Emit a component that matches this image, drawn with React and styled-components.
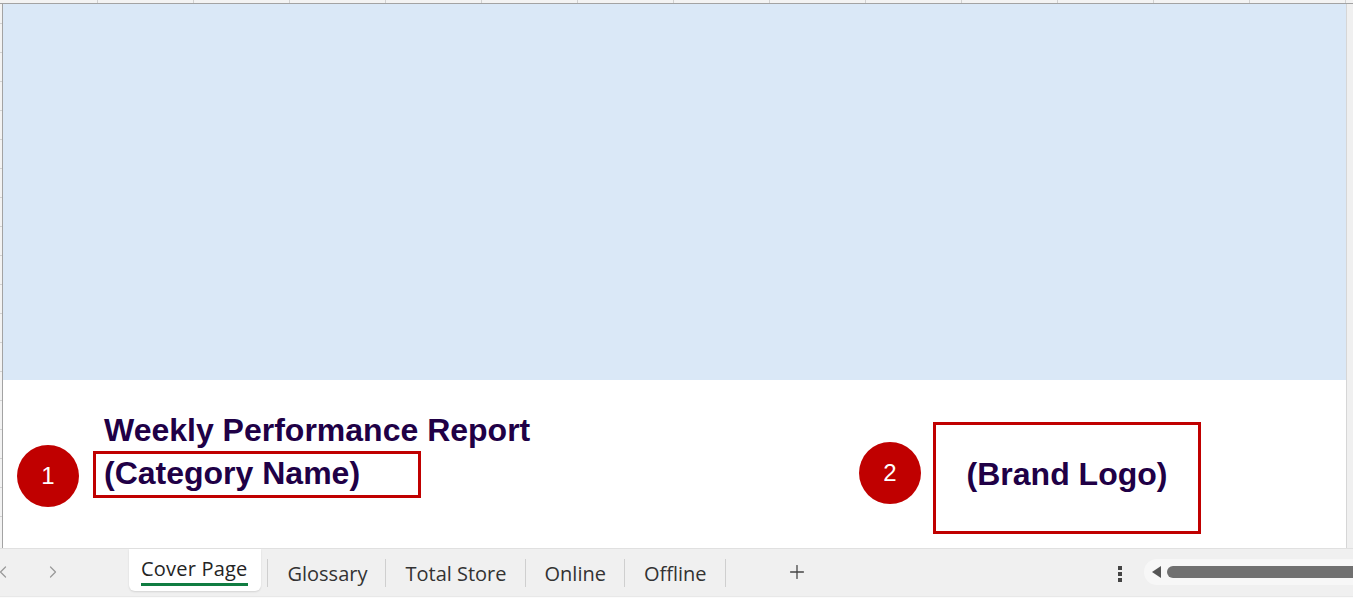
import React from 'react';
import styled, { createGlobalStyle } from 'styled-components';
import { ChevronLeft, ChevronRight, Plus } from 'lucide-react';

const GlobalStyle = createGlobalStyle`
  html, body { margin: 0; padding: 0; }
  body { background: #f0f0f0; overflow: hidden; }
  * { box-sizing: border-box; }
`;

const Window = styled.div`
  width: 1353px;
  height: 598px;
  display: flex;
  flex-direction: column;
  background: #f0f0f0;
  overflow: hidden;
`;

const ColumnHeader = styled.div`
  height: 4px;
  flex: 0 0 4px;
  display: flex;
  padding-left: 2px;
  background: #f3f3f3;
  border-bottom: 1px solid #a3a3a3;
`;

const ColumnCell = styled.div`
  flex: 0 0 96px;
  border-right: 1px solid #d2d2d2;
`;

const Body = styled.div`
  height: 544px;
  flex: 0 0 544px;
  display: flex;
`;

const RowHeader = styled.div`
  width: 3px;
  border-right: 1px solid #a3a3a3;
  background: repeating-linear-gradient(
    to bottom,
    #f3f3f3 0px,
    #f3f3f3 28px,
    #d2d2d2 28px,
    #d2d2d2 29px
  );
  background-position: 0 -9px;
`;

const Sheet = styled.div`
  flex: 1;
  display: flex;
  flex-direction: column;
  background: #fff;
  border-right: 1px solid #d6d6d6;
`;

const Banner = styled.div`
  height: 376px;
  flex: 0 0 376px;
  background: #dae8f7;
`;

const Canvas = styled.div`
  flex: 1;
  display: flex;
  justify-content: space-between;
  align-items: flex-start;
  padding: 0 145px 0 14px;
  font-family: "Liberation Sans", Arial, sans-serif;
  font-weight: bold;
  color: #200046;
`;

const VGutter = styled.div`
  width: 6px;
  background: #f0f0f0;
`;

const TitleGroup = styled.div`
  margin-top: 28px;
  display: grid;
  grid-template-columns: 62px auto;
  column-gap: 14px;
  align-items: start;
`;

const LogoGroup = styled.div`
  margin-top: 42px;
  display: flex;
  align-items: center;
  gap: 12px;
`;

const Badge = styled.div`
  width: 62px;
  height: 62px;
  border-radius: 50%;
  background: #c00000;
  color: #fff;
  display: flex;
  align-items: center;
  justify-content: center;
  font-family: "Liberation Sans", Arial, sans-serif;
  font-weight: normal;
  font-size: 24px;
  grid-column: 1;
  grid-row: 2;
  margin-bottom: ${p => p.$lift || 0}px;
`;

const Heading = styled.div`
  grid-column: 2;
  grid-row: 1;
  font-size: 32px;
  padding-top: 8px;
  line-height: 29px;
  height: 37px;
  padding-left: 11px;
  white-space: nowrap;
`;

const CategoryBox = styled.div`
  grid-column: 2;
  grid-row: 2;
  margin-top: 6px;
  width: 328px;
  height: 47px;
  border: 3px solid #c00000;
  font-size: 32px;
  line-height: 38px;
  padding-left: 8px;
  white-space: nowrap;
`;

const LogoBox = styled.div`
  width: 268px;
  height: 112px;
  border: 3px solid #c00000;
  display: flex;
  align-items: center;
  justify-content: center;
  font-size: 32px;
  padding-bottom: 8px;
`;

const TabBar = styled.div`
  height: 50px;
  flex: 0 0 50px;
  display: flex;
  align-items: flex-start;
  border-top: 1px solid #e0e0e0;
  background: #f0f0f0;
  font-family: "Open Sans", "Noto Sans", sans-serif;
  position: relative;
`;

const BottomEdge = styled.div`
  position: absolute;
  left: 0;
  right: 0;
  bottom: 0;
  height: 2px;
  background: #fbfbfb;
  border-top: 1px solid #e8e8e8;
`;

const NavArea = styled.div`
  width: 136px;
  height: 46px;
  display: flex;
  align-items: center;
  color: #9a9a9a;
  margin-left: -7px;
  gap: 30px;
`;

const ActiveTab = styled.div`
  height: 42px;
  padding: 7px 14px 0 12px;
  background: #fff;
  border-radius: 0 0 6px 6px;
  box-shadow: 0 1px 2px rgba(0, 0, 0, 0.12);
  display: flex;
  flex-direction: column;
  align-items: flex-start;
  font-size: 20px;
  letter-spacing: 0.2px;
  color: #242424;
  line-height: 26px;
`;

const Underline = styled.div`
  height: 3px;
  align-self: stretch;
  background: #107c41;
  margin-top: 1px;
  margin-right: -1px;
`;

const Separator = styled.div`
  width: 1px;
  height: 28px;
  margin: 10px 0 0 ${p => p.$gap || 0}px;
  background: #cfcfcf;
`;

const Tab = styled.div`
  padding: 12px 18px 0 19px;
  font-size: 20px;
  line-height: 26px;
  color: #333;
  white-space: nowrap;
`;

const AddButton = styled.div`
  margin: 12px 0 0 60px;
  color: #444;
  display: flex;
`;

const Spacer = styled.div`
  flex: 1;
`;

const MoreDots = styled.div`
  margin-top: 17px;
  display: flex;
  flex-direction: column;
  gap: 2px;
  span {
    width: 4px;
    height: 4px;
    background: #444;
  }
`;

const ScrollTrack = styled.div`
  margin: 10px 0 0 22px;
  width: 209px;
  height: 26px;
  border-radius: 13px 0 0 13px;
  background: #f7f7f7;
  display: flex;
  align-items: center;
  padding-left: 8px;
  gap: 6px;
`;

const ArrowLeft = styled.div`
  width: 0;
  height: 0;
  border-top: 6px solid transparent;
  border-bottom: 6px solid transparent;
  border-right: 9px solid #555;
`;

const Thumb = styled.div`
  flex: 1;
  height: 12px;
  border-radius: 6px 0 0 6px;
  background: #707070;
`;

const columns = Array.from({ length: 14 });
const tabs = ['Glossary', 'Total Store', 'Online', 'Offline'];

export default function App() {
  return (
    <Window>
      <GlobalStyle />
      <ColumnHeader>
        {columns.map((_, i) => <ColumnCell key={i} />)}
      </ColumnHeader>
      <Body>
        <RowHeader />
        <Sheet>
          <Banner />
          <Canvas>
            <TitleGroup>
              <Heading>Weekly Performance Report</Heading>
              <Badge>1</Badge>
              <CategoryBox>(Category Name)</CategoryBox>
            </TitleGroup>
            <LogoGroup>
              <Badge $lift={11}>2</Badge>
              <LogoBox>(Brand Logo)</LogoBox>
            </LogoGroup>
          </Canvas>
        </Sheet>
        <VGutter />
      </Body>
      <TabBar>
        <NavArea>
          <ChevronLeft size={20} strokeWidth={1.5} />
          <ChevronRight size={20} strokeWidth={1.5} />
        </NavArea>
        <ActiveTab>
          Cover Page
          <Underline />
        </ActiveTab>
        <Separator $gap={6} />
        {tabs.map(t => (
          <React.Fragment key={t}>
            <Tab>{t}</Tab>
            <Separator />
          </React.Fragment>
        ))}
        <AddButton><Plus size={22} strokeWidth={1.4} /></AddButton>
        <Spacer />
        <MoreDots><span /><span /><span /></MoreDots>
        <ScrollTrack>
          <ArrowLeft />
          <Thumb />
        </ScrollTrack>
        <BottomEdge />
      </TabBar>
    </Window>
  );
}
